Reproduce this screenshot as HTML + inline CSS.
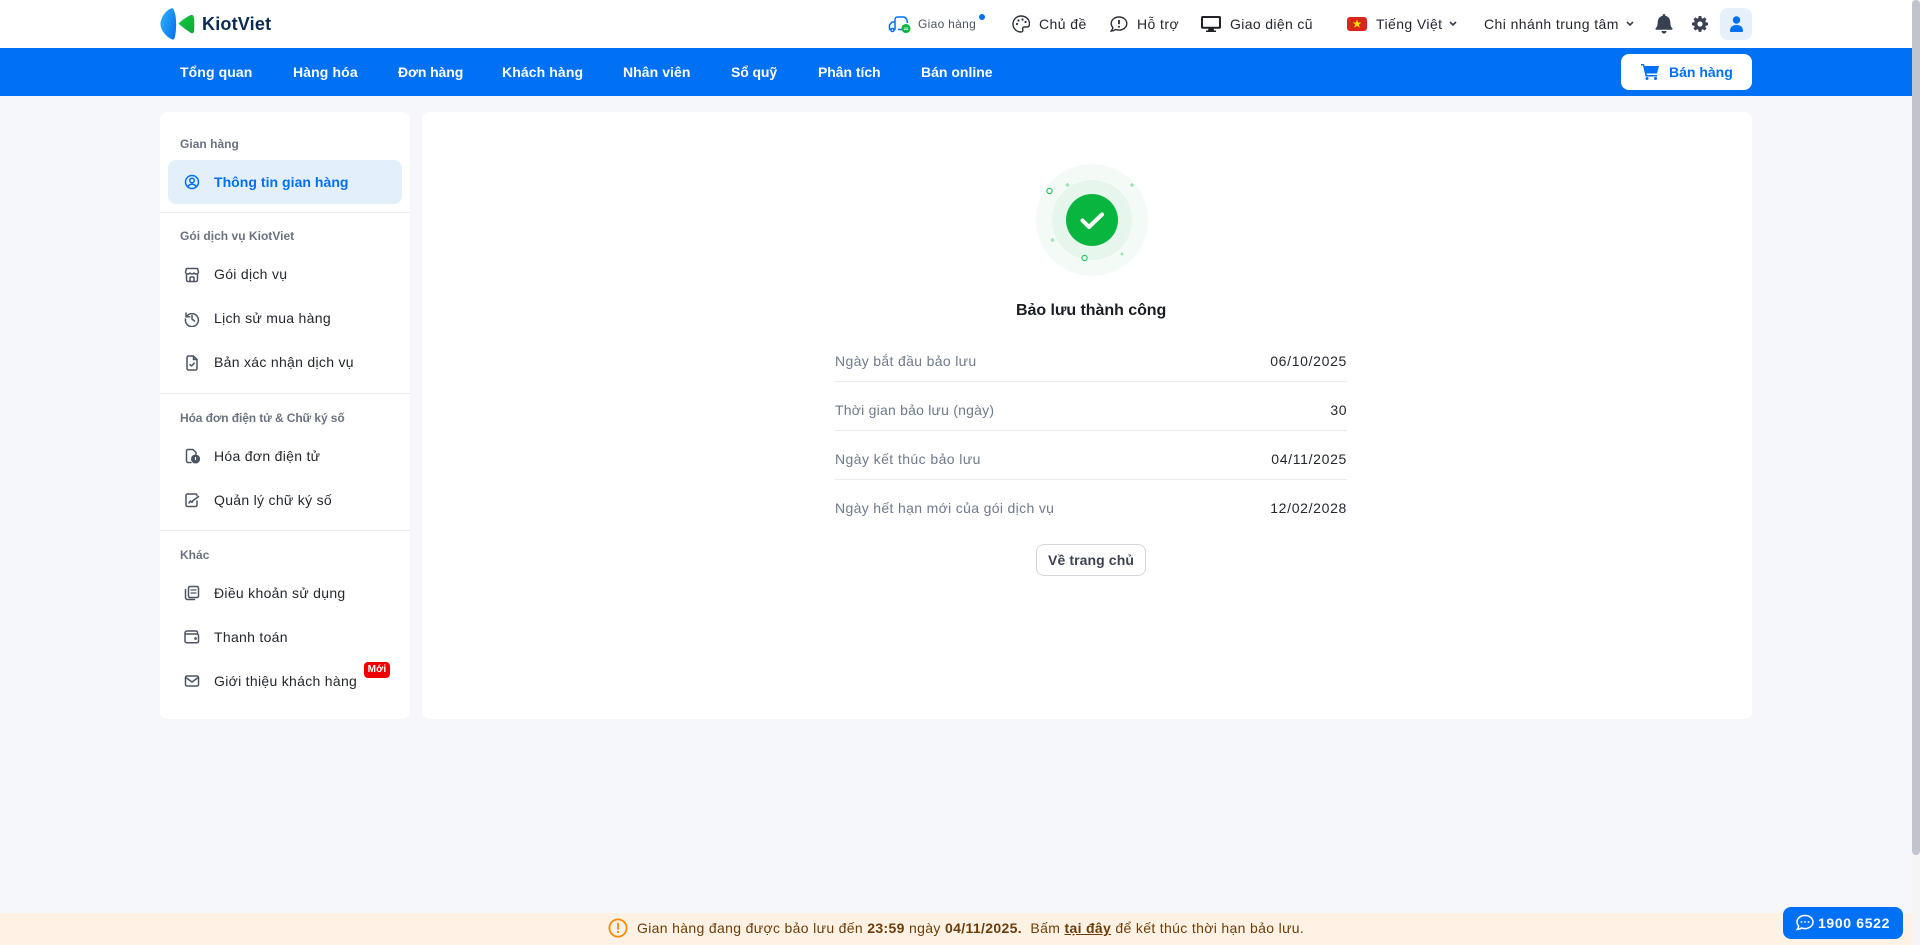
<!DOCTYPE html>
<html lang="vi">
<head>
<meta charset="utf-8">
<title>KiotViet</title>
<style>
*{box-sizing:border-box;margin:0;padding:0}
html,body{width:1920px;height:945px;overflow:hidden;background:#f5f7fa;font-family:"Liberation Sans",sans-serif;color:#23272e}
.t{position:absolute;white-space:nowrap;line-height:20px;height:20px;font-size:14px;letter-spacing:.42px}
.b{font-weight:bold}
svg{position:absolute;display:block}
.box{position:absolute}
header{position:absolute;left:0;top:0;width:1912px;height:48px;background:#fff}
nav{position:absolute;left:0;top:48px;width:1912px;height:48px;background:#0070f4}
nav .t{color:#fff;font-weight:bold;top:14px;letter-spacing:.06px}
.card{position:absolute;background:#fff;border-radius:8px}
.lab{font-size:12px;font-weight:bold;color:#6b7280;letter-spacing:.02px}
.side .t:not(.lab):not(.b){letter-spacing:.3px}
.side svg{fill:none;stroke:#4b5563;stroke-width:1.5;stroke-linecap:round;stroke-linejoin:round}
.hr{position:absolute;height:1px;background:#e8eaed}
.k{color:#6f7a8a;left:835px;letter-spacing:.34px}
.v{right:573px;letter-spacing:.67px;color:#23272e}
</style>
</head>
<body>
<header>
  <svg style="left:160px;top:7px" width="36" height="34" viewBox="0 0 36 34">
    <defs>
      <linearGradient id="g1" x1="0" y1="0" x2="1" y2=".6"><stop offset="0" stop-color="#34b4f8"/><stop offset="1" stop-color="#0a78f2"/></linearGradient>
      <linearGradient id="g2" x1="0" y1="0" x2="1" y2="1"><stop offset="0" stop-color="#18c93f"/><stop offset="1" stop-color="#08a838"/></linearGradient>
    </defs>
    <path d="M12 1.200C7 2 1 9.500.5 16.500.3 23 6 30 12.500 32.500c1.200.4 2-.5 2.500-3 1.400-5 1.600-18 0-23-.8-3-1.500-5.500-3-5.300z" fill="url(#g1)"/>
    <path d="M31 8c-3 1-9 5-12.500 8.500C22 20 28 24 31 26c1.500.8 2.800 0 3-2 .4-4 .4-10 0-13-.2-2-1.500-3.500-3-3z" fill="url(#g2)"/>
  </svg>
  <div class="t b" style="left:202px;top:14px;font-size:18px;color:#0b2b50;letter-spacing:.2px">KiotViet</div>

  <svg style="left:888px;top:15px" width="24" height="20" viewBox="0 0 24 20" fill="none" stroke="#0070f4" stroke-width="1.500">
    <path d="M7 7V4.500C7 3 8 2 9.500 2h6C17.500 2 19 3.500 19.500 8"/>
    <path d="M7 7H4L1.500 10v4.500H3M7 7v7.500H6" stroke-linejoin="round"/><circle cx="4.500" cy="15" r="1.500"/>
    <path d="M10 14.500h4"/>
    <circle cx="18" cy="13.500" r="3.800" fill="#08b53f" stroke="#08b53f"/><path d="M15.800 13h4.400M15.800 14.500h4.400" stroke="#fff" stroke-width=".8"/>
  </svg>
  <div class="t" style="left:918px;top:14px;font-size:12px;color:#4b5563;letter-spacing:.3px">Giao hàng</div>
  <div class="box" style="left:979px;top:14px;width:6px;height:6px;border-radius:50%;background:#0070f4"></div>

  <svg style="left:1012px;top:15px" width="18" height="18" viewBox="0 0 18 18" fill="none" stroke="#2b3038" stroke-width="1.400">
    <path d="M9 1C4.500 1 1 4.500 1 9s3.500 8 8 8c1.500 0 2-1 1.800-2-.3-1.200-.3-3 1.700-3h2.500c1.500 0 2.500-1 2.500-3.200C17.500 4 13.500 1 9 1z"/>
    <circle cx="5" cy="9" r="1.100" fill="#2b3038" stroke="none"/><circle cx="6.500" cy="5.500" r="1.100" fill="#2b3038" stroke="none"/><circle cx="10.500" cy="4.500" r="1.100" fill="#2b3038" stroke="none"/><circle cx="13.500" cy="7" r="1.100" fill="#2b3038" stroke="none"/>
  </svg>
  <div class="t" style="left:1039px;top:14px">Chủ đề</div>

  <svg style="left:1110px;top:15px" width="18" height="18" viewBox="0 0 18 18" fill="none" stroke="#2b3038" stroke-width="1.400">
    <path d="M9 2C4.600 2 1.200 4.800 1.200 8.500c0 1.600.7 3 1.700 4.100-.2 1.400-1 2.600-1.700 3.400 1.700 0 3.300-.7 4.300-1.500 1.100.4 2.300.6 3.500.6 4.400 0 7.800-2.900 7.800-6.600S13.400 2 9 2z"/>
    <path d="M9 5v4.200" stroke-width="1.800"/><circle cx="9" cy="11.700" r="1" fill="#2b3038" stroke="none"/>
  </svg>
  <div class="t" style="left:1137px;top:14px">Hỗ trợ</div>

  <svg style="left:1201px;top:16px" width="20" height="16" viewBox="0 0 20 16">
    <path d="M1.500 0h17C19.300 0 20 .7 20 1.500v9.800c0 .8-.7 1.500-1.500 1.500h-17C.7 12.800 0 12.100 0 11.300V1.500C0 .7.700 0 1.500 0zM2 2v8.800h16V2z" fill="#1f2328"/>
    <path d="M7.500 12.500h5l.6 2H15V16H5v-1.500h1.900z" fill="#1f2328"/>
  </svg>
  <div class="t" style="left:1230px;top:14px;letter-spacing:.36px">Giao diện cũ</div>

  <div class="box" style="left:1347px;top:17px;width:20px;height:14px;border-radius:3px;background:#da251d"></div>
  <svg style="left:1352px;top:19px" width="10" height="10" viewBox="0 0 10 10"><path d="M5 .5l1.200 3h3.200L6.800 5.500l1 3.300L5 6.900 2.200 8.800l1-3.300L.6 3.500h3.200z" fill="#ffde00"/></svg>
  <div class="t" style="left:1376px;top:14px">Tiếng Việt</div>
  <svg style="left:1449px;top:21px" width="8" height="6" viewBox="0 0 8 6" fill="none" stroke="#374151" stroke-width="1.600"><path d="M1 1l3 3 3-3"/></svg>

  <div class="t" style="left:1484px;top:14px">Chi nhánh trung tâm</div>
  <svg style="left:1626px;top:21px" width="8" height="6" viewBox="0 0 8 6" fill="none" stroke="#374151" stroke-width="1.600"><path d="M1 1l3 3 3-3"/></svg>

  <svg style="left:1655px;top:14px" width="18" height="20" viewBox="0 0 18 20" fill="#374151">
    <path d="M9 0c-.8 0-1.300.6-1.300 1.300v.6C4.700 2.500 2.700 5 2.700 8c0 3.500-.8 5-2 6.300-.5.500-.2 1.400.6 1.400h15.400c.8 0 1.100-.9.600-1.400-1.200-1.300-2-2.800-2-6.300 0-3-2-5.500-5-6.100v-.6C10.300.6 9.800 0 9 0z"/><path d="M6.500 17h5c0 1.500-1.100 2.600-2.500 2.600S6.500 18.500 6.500 17z"/>
  </svg>
  <svg style="left:1692px;top:16px" width="16" height="16" viewBox="0 0 16 16">
    <path fill-rule="evenodd" fill="#374151" d="M6.700 0h2.600l.4 2.100 1.100.5 1.800-1.200 1.900 1.900-1.200 1.800.5 1.100 2.200.4v2.700l-2.200.4-.5 1.100 1.200 1.800-1.900 1.900-1.800-1.200-1.100.5-.4 2.100H6.700l-.4-2.100-1.100-.5-1.800 1.200-1.900-1.900 1.200-1.800-.5-1.100L0 9.300V6.600l2.200-.4.500-1.100-1.200-1.800 1.900-1.900 1.800 1.200 1.100-.5zM8 5.400a2.600 2.600 0 100 5.200 2.600 2.600 0 000-5.200z"/>
  </svg>
  <div class="box" style="left:1720px;top:8px;width:32px;height:32px;border-radius:8px;background:#e6f0fb"></div>
  <svg style="left:1730px;top:16px" width="13" height="16" viewBox="0 0 13 16" fill="#0070f4"><circle cx="6.500" cy="4" r="3.700"/><path d="M0 15c0-4 2.500-6 6.500-6s6.500 2 6.500 6c0 .6-.4 1-1 1H1c-.6 0-1-.4-1-1z"/></svg>
</header>

<nav>
  <div class="t" style="left:180px;letter-spacing:.1px">Tổng quan</div>
  <div class="t" style="left:293px;letter-spacing:.12px">Hàng hóa</div>
  <div class="t" style="left:398px;letter-spacing:-.1px">Đơn hàng</div>
  <div class="t" style="left:502px;letter-spacing:.1px">Khách hàng</div>
  <div class="t" style="left:623px">Nhân viên</div>
  <div class="t" style="left:731px;letter-spacing:-.1px">Sổ quỹ</div>
  <div class="t" style="left:818px;letter-spacing:-.05px">Phân tích</div>
  <div class="t" style="left:921px;letter-spacing:0">Bán online</div>
  <div class="box" style="left:1621px;top:6px;width:131px;height:36px;border-radius:8px;background:#fff"></div>
  <svg style="left:1641px;top:16px" width="18" height="16" viewBox="0 0 18 16" fill="#0070f4">
    <path d="M0 0h3l.6 2H18l-2 7.500H5.500l.4 1.500H16v1.500H4.600L2 1.500H0z"/><circle cx="6" cy="14.500" r="1.500"/><circle cx="14.500" cy="14.500" r="1.500"/>
  </svg>
  <div class="t" style="left:1669px;color:#0070f4;letter-spacing:0">Bán hàng</div>
</nav>

<aside class="card side" style="left:160px;top:112px;width:250px;height:607px">
  <div class="t lab" style="left:20px;top:22px">Gian hàng</div>
  <div class="box" style="left:8px;top:48px;width:234px;height:44px;border-radius:8px;background:#e3f0fc"></div>
  <svg style="left:24px;top:62px;stroke:#0070f4" width="16" height="16" viewBox="0 0 16 16"><circle cx="8" cy="8" r="6.500"/><circle cx="8" cy="6.500" r="2.300"/><path d="M3.800 12.800C4.500 11 6 10.200 8 10.200s3.500.8 4.200 2.600"/></svg>
  <div class="t b" style="left:54px;top:60px;color:#0070f4;letter-spacing:.04px">Thông tin gian hàng</div>
  <div class="hr" style="left:0;top:100px;width:250px"></div>

  <div class="t lab" style="left:20px;top:114px">Gói dịch vụ KiotViet</div>
  <svg style="left:24px;top:155px" width="16" height="16" viewBox="0 0 16 16"><path d="M2.500 1.500h11l1 3.500c0 1.200-1 2-2.200 2-1 0-1.800-.4-2.300-1-.5.600-1.200 1-2 1s-1.500-.4-2-1c-.5.600-1.300 1-2.300 1C2.500 7 1.500 6.200 1.500 5z"/><path d="M2.500 7.500v5.500c0 .8.700 1.500 1.500 1.500h8c.8 0 1.500-.7 1.500-1.500V7.500"/><path d="M6 14.500v-3.500c0-.5.500-1 1-1h2c.5 0 1 .5 1 1v3.500"/></svg>
  <div class="t" style="left:54px;top:152px">Gói dịch vụ</div>
  <svg style="left:24px;top:199px" width="16" height="16" viewBox="0 0 16 16"><path d="M2.500 5.500A6.500 6.500 0 111.500 8"/><path d="M2 2v3.700h3.700"/><path d="M8 4.500V8l2.500 2"/></svg>
  <div class="t" style="left:54px;top:196px">Lịch sử mua hàng</div>
  <svg style="left:24px;top:243px" width="16" height="16" viewBox="0 0 16 16"><path d="M3 2.500C3 1.700 3.700 1 4.500 1h5l3.500 3.500v9c0 .8-.7 1.500-1.500 1.500h-7C3.700 15 3 14.300 3 13.500z"/><path d="M9.500 1v3.500H13"/><path d="M6 9.500l1.500 1.500 2.800-2.800"/></svg>
  <div class="t" style="left:54px;top:240px">Bản xác nhận dịch vụ</div>
  <div class="hr" style="left:0;top:281px;width:250px"></div>

  <div class="t lab" style="left:20px;top:296px;letter-spacing:-.1px">Hóa đơn điện tử &amp; Chữ ký số</div>
  <svg style="left:24px;top:336px" width="16" height="16" viewBox="0 0 16 16"><path d="M7 14.500H4C3.200 14.500 2.500 13.800 2.500 13V3C2.500 2.200 3.200 1.500 4 1.500h5L12 4.500V6"/><circle cx="11.500" cy="11" r="3.800" fill="#4b5563"/><path d="M11.500 9.500V11.500" stroke="#fff" stroke-width="1.200"/></svg>
  <div class="t" style="left:54px;top:334px">Hóa đơn điện tử</div>
  <svg style="left:24px;top:380px" width="16" height="16" viewBox="0 0 16 16"><path d="M13 9v4c0 .8-.7 1.500-1.500 1.500h-8C2.700 14.500 2 13.800 2 13V3.500C2 2.700 2.700 2 3.500 2h8c.8 0 1.500.7 1.500 1.500"/><path d="M5 11c1-2 1.500-2.500 2-1.500s1 1 1.500.5"/><path d="M8.500 9L14.500 4.500"/></svg>
  <div class="t" style="left:54px;top:378px">Quản lý chữ ký số</div>
  <div class="hr" style="left:0;top:418px;width:250px"></div>

  <div class="t lab" style="left:20px;top:433px">Khác</div>
  <svg style="left:24px;top:473px" width="16" height="16" viewBox="0 0 16 16"><rect x="4.500" y="1.500" width="10" height="11" rx="1.500"/><path d="M1.500 4.500v8c0 1.200.9 2 2 2h7"/><path d="M7 5h5M7 8h5" stroke-width="1.200"/></svg>
  <div class="t" style="left:54px;top:471px">Điều khoản sử dụng</div>
  <svg style="left:24px;top:517px" width="16" height="16" viewBox="0 0 16 16"><path d="M13.500 5V3.500C13.500 2.700 12.800 2 12 2H3C2 2 1 3 1 4v8c0 1 .8 1.800 1.800 1.800H13c.8 0 1.500-.7 1.500-1.500V6.500C14.500 5.700 13.800 5 13 5H1.500"/><circle cx="11.500" cy="9.500" r=".6"/></svg>
  <div class="t" style="left:54px;top:515px">Thanh toán</div>
  <svg style="left:24px;top:561px" width="16" height="16" viewBox="0 0 16 16"><rect x="1.500" y="3" width="13" height="10" rx="1.500"/><path d="M1.800 4.500L8 9l6.200-4.500"/></svg>
  <div class="t" style="left:54px;top:559px">Giới thiệu khách hàng</div>
  <div class="box" style="left:204px;top:550px;width:26px;height:16px;border-radius:4px;background:#f00000"></div>
  <div class="t b" style="left:204px;top:548px;width:26px;text-align:center;font-size:10px;color:#fff;letter-spacing:.2px">Mới</div>
</aside>

<main class="card" style="left:422px;top:112px;width:1330px;height:607px"></main>

<svg style="left:1032px;top:160px" width="120" height="120" viewBox="0 0 120 120">
  <circle cx="60" cy="60" r="56" fill="#f4fbf7"/>
  <circle cx="60" cy="60" r="40" fill="#e6f6ec"/>
  <circle cx="60" cy="60" r="26" fill="#08b53f"/>
  <path d="M50.500 60.500L57 67 70 54.500" fill="none" stroke="#fff" stroke-width="4" stroke-linecap="round" stroke-linejoin="round"/>
  <circle cx="17.500" cy="31" r="2.600" fill="none" stroke="#2fc468" stroke-width="1.200"/>
  <circle cx="52.500" cy="98" r="2.600" fill="none" stroke="#2fc468" stroke-width="1.200"/>
  <path d="M35.500 23v4M33.500 25h4M100 23v4M98 25h4M20.500 78v4M18.500 80h4M90 92.500v3M88.500 94h3" stroke="#8ae0aa" stroke-width="1.200"/>
</svg>
<div class="t b" style="left:1016px;top:301px;font-size:16px;color:#1a1d21;letter-spacing:-.05px">Bảo lưu thành công</div>

<div class="t k" style="top:351px">Ngày bắt đầu bảo lưu</div><div class="t v" style="top:351px">06/10/2025</div>
<div class="hr" style="left:835px;top:381px;width:512px"></div>
<div class="t k" style="top:400px;letter-spacing:.22px">Thời gian bảo lưu (ngày)</div><div class="t v" style="top:400px;letter-spacing:.5px">30</div>
<div class="hr" style="left:835px;top:430px;width:512px"></div>
<div class="t k" style="top:449px;letter-spacing:.42px">Ngày kết thúc bảo lưu</div><div class="t v" style="top:449px">04/11/2025</div>
<div class="hr" style="left:835px;top:479px;width:512px"></div>
<div class="t k" style="top:498px">Ngày hết hạn mới của gói dịch vụ</div><div class="t v" style="top:498px">12/02/2028</div>

<div class="box" style="left:1036px;top:544px;width:110px;height:32px;border:1px solid #d3d6db;border-radius:8px;background:#fff"></div>
<div class="t b" style="left:1048px;top:550px;color:#3d4450;letter-spacing:.1px">Về trang chủ</div>

<div class="box" style="left:0;top:913px;width:1912px;height:32px;background:#fff2e5"></div>
<svg style="left:608px;top:918px" width="20" height="20" viewBox="0 0 20 20" fill="none"><circle cx="10" cy="10" r="8.600" stroke="#ff8a00" stroke-width="1.800"/><path d="M10 5.500v5.500" stroke="#ff8a00" stroke-width="1.800" stroke-linecap="round"/><circle cx="10" cy="14" r="1.100" fill="#ff8a00"/></svg>
<div class="t" style="left:637px;top:918px;color:#6b3d08;letter-spacing:.34px">Gian hàng đang được bảo lưu đến <b>23:59</b> ngày <b>04/11/2025.</b>&nbsp; Bấm <b style="text-decoration:underline">tại đây</b> để kết thúc thời hạn bảo lưu.</div>

<div class="box" style="left:1783px;top:907px;width:120px;height:32px;border-radius:8px;background:#0070f4"></div>
<svg style="left:1796px;top:914px" width="18" height="18" viewBox="0 0 18 18" fill="none" stroke="#fff" stroke-width="1.500"><path d="M9 1.500C4.600 1.500 1 4.300 1 8c0 1.600.7 3 1.700 4.100-.2 1.400-.9 2.700-1.500 3.400 1.700 0 3.200-.7 4.200-1.500 1.100.4 2.300.6 3.600.6 4.400 0 8-2.900 8-6.600S13.400 1.500 9 1.500z"/><circle cx="5.500" cy="8" r=".9" fill="#fff" stroke="none"/><circle cx="9" cy="8" r=".9" fill="#fff" stroke="none"/><circle cx="12.500" cy="8" r=".9" fill="#fff" stroke="none"/></svg>
<div class="t b" style="left:1818px;top:913px;color:#fff;letter-spacing:.65px">1900 6522</div>

<div class="box" style="left:1912px;top:0;width:8px;height:945px;background:#f5f5f6"></div>
<div class="box" style="left:1912px;top:0;width:8px;height:855px;border-radius:4px;background:#c1c4cc"></div>
</body>
</html>
